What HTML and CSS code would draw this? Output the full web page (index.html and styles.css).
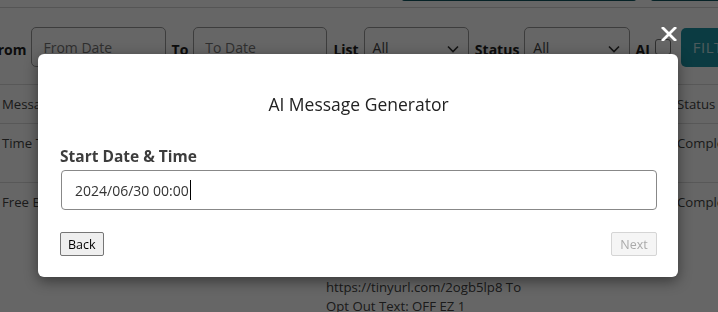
FILE: index.html
```html
<!DOCTYPE html>
<html lang="en">
<head>
<meta charset="utf-8">
<title>Messages</title>
<link rel="stylesheet" href="styles.css">
</head>
<body>
<div class="page">
  <header class="toolbar">
    <button class="tb-btn tb-wide" aria-label="Generate"></button>
    <button class="tb-btn" aria-label="New"></button>
  </header>

  <form class="filters">
    <label class="flabel">From</label>
    <div class="finput placeholder">From Date</div>
    <label class="flabel">To</label>
    <div class="finput placeholder">To Date</div>
    <label class="flabel">List</label>
    <div class="fselect"><span>All</span><svg class="chev" viewBox="0 0 12 8" width="12" height="8"><path d="M1 1.5 6 6.5 11 1.5" fill="none" stroke="#333" stroke-width="1.6"/></svg></div>
    <label class="flabel">Status</label>
    <div class="fselect"><span>All</span><svg class="chev" viewBox="0 0 12 8" width="12" height="8"><path d="M1 1.5 6 6.5 11 1.5" fill="none" stroke="#333" stroke-width="1.6"/></svg></div>
    <label class="flabel">AI</label>
    <span class="fcheck"></span>
    <button type="button" class="filter-btn">FILTER</button>
  </form>

  <table class="grid">
    <colgroup><col class="c1"><col class="c2"><col class="c3"><col class="c4"></colgroup>
    <thead>
      <tr><th>Message Type</th><th>Sent</th><th>Message</th><th>Status</th></tr>
    </thead>
    <tbody>
      <tr>
        <td>Time Triggered</td><td>06/29/2024</td>
        <td>Reminder: your weekly reward is ready<br>Reply STOP to opt out</td>
        <td>Completed</td>
      </tr>
      <tr>
        <td>Free Bonus</td><td>06/28/2024</td>
        <td><div>Claim your free bonus today!<br>Play now and win big this weekend<br>Offer valid until Sunday<br>Visit the link below</div><div class="para">https://tinyurl.com/2ogb5lp8 To<br>Opt Out Text: OFF EZ 1</div></td>
        <td>Completed</td>
      </tr>
    </tbody>
  </table>
</div>

<div class="backdrop"></div>

<div class="modal" role="dialog" aria-label="AI Message Generator">
  <button class="close" aria-label="Close"><svg viewBox="0 0 16 14" width="16" height="14"><path d="M2 1 14 13M14 1 2 13" stroke="#fff" stroke-width="2.8" stroke-linecap="square"/></svg></button>
  <h2 class="title">AI Message Generator</h2>
  <label class="mlabel">Start Date &amp; Time</label>
  <div class="mfield"><span>2024/06/30 00:00</span><span class="caret"></span></div>
  <div class="actions">
    <button class="btn">Back</button>
    <button class="btn" disabled>Next</button>
  </div>
</div>
</body>
</html>
```
FILE: styles.css
```css
html, body {
  margin: 0;
  padding: 0;
  overflow: hidden;
  background: #fff;
  font-family: "Open Sans", "Noto Sans", sans-serif;
  color: #333;
}

.page {
  margin-top: -34px;
  margin-left: -10px;
  width: 800px;
}

.toolbar {
  height: 41px;
  border-bottom: 1px solid #d4d4d4;
  display: flex;
  align-items: flex-start;
  gap: 13px;
  padding-left: 411px;
}

.tb-btn {
  height: 35px;
  width: 110px;
  border: 0;
  border-radius: 4px;
  background: #1f7a86;
  border-bottom: 1px solid #0f5560;
}
.tb-wide { width: 236px; }

.filters {
  display: flex;
  align-items: center;
  padding-top: 19px;
  height: 40px;
  margin: 0;
}

.flabel {
  font-weight: 700;
  font-size: 14px;
  color: #222;
  margin-right: 5px;
  padding-top: 4px;
}

.finput, .fselect {
  box-sizing: border-box;
  height: 40px;
  border: 1px solid #999;
  border-radius: 5px;
  font-size: 14px;
  display: flex;
  align-items: center;
  padding: 0 11px;
  margin-right: 6px;
}
.finput { width: 135px; }
.placeholder { color: #777; }
.fselect {
  width: 106px;
  justify-content: space-between;
  padding: 0 9px 0 8px;
  color: #444;
}
.chev { margin-top: 4px; }

.fcheck {
  width: 14px;
  height: 14px;
  border: 1px solid #777;
  border-radius: 3px;
  margin-right: 10px;
}

.filter-btn {
  height: 39px;
  width: 110px;
  border: 0;
  border-radius: 5px;
  background: #1d95a6;
  color: rgba(235,245,247,.8);
  font-family: inherit;
  font-size: 15px;
  text-align: left;
  padding-left: 12px;
  letter-spacing: .5px;
}

.grid {
  margin-top: 17px;
  border-collapse: collapse;
  table-layout: fixed;
  width: 800px;
  font-size: 13.2px;
  line-height: 19px;
  color: #444;
}
.c1 { width: 210px; }
.c2 { width: 114px; }
.c3 { width: 351px; }
.c4 { width: 125px; }

.grid th, .grid td {
  text-align: left;
  vertical-align: top;
  padding: 10px 12px;
  border-top: 1px solid #ddd;
  white-space: nowrap;
  overflow: hidden;
  font-weight: 400;
}
.grid th { padding: 10px 12px 9px; }
.grid thead tr { border-bottom: 1px solid #ddd; }
.para { margin-top: 9px; }

.backdrop {
  position: fixed;
  inset: 0;
  background: rgba(0,0,0,.6);
}

.modal {
  position: fixed;
  left: 38px;
  top: 54px;
  width: 640px;
  box-sizing: border-box;
  padding: 38px 21px 21px 22px;
  background: #fff;
  border-radius: 6px;
  box-shadow: 0 4px 14px rgba(0,0,0,.45);
  display: flex;
  flex-direction: column;
}

.close {
  position: absolute;
  top: -27px;
  right: 1px;
  padding: 0;
  border: 0;
  background: none;
  line-height: 0;
}

.title {
  margin: 0;
  text-align: center;
  font-size: 17.5px;
  font-weight: 400;
  line-height: 24px;
  color: #222;
}

.mlabel {
  margin-top: 30px;
  font-size: 15.5px;
  font-weight: 700;
  line-height: 20px;
  color: #3d3d3d;
}

.mfield {
  margin-top: 4px;
  margin-left: 1px;
  box-sizing: border-box;
  height: 40px;
  border: 1px solid #888;
  border-radius: 4px;
  padding: 0 13px;
  display: flex;
  align-items: center;
  font-size: 14px;
  color: #333;
}
.caret {
  width: 1px;
  height: 20px;
  background: #000;
  margin-left: 1px;
}

.actions {
  margin-top: 22px;
  display: flex;
  justify-content: space-between;
}

.btn {
  height: 24px;
  box-sizing: border-box;
  padding: 0 7px;
  font-family: inherit;
  font-size: 12.5px;
  color: #000;
  background: #efefef;
  border: 1px solid #767676;
  border-radius: 2px;
}
.btn:disabled {
  color: #aaa;
  background: #f5f5f5;
  border-color: #d5d5d5;
  width: 46px;
}
```
